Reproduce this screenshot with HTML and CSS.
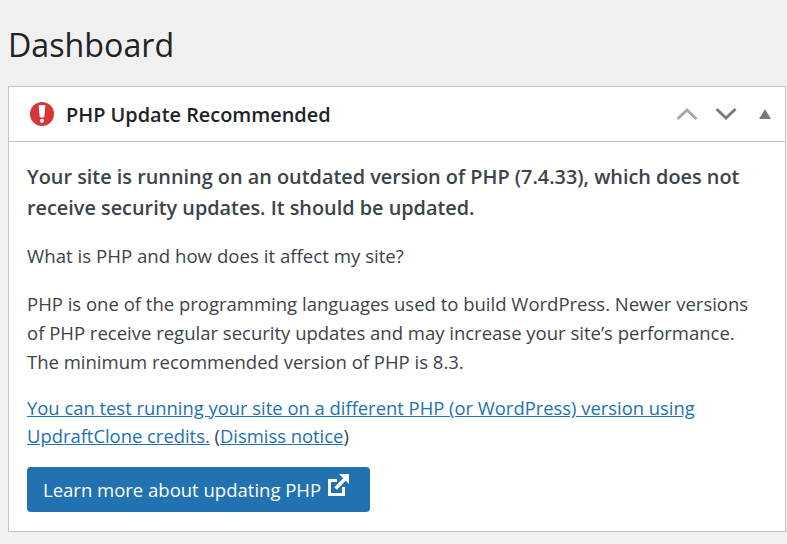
FILE: index.html
```html
<!DOCTYPE html>
<html lang="en">
<head>
  <meta charset="UTF-8" />
  <title>Dashboard</title>
  <link rel="stylesheet" href="styles.css">
</head>
<body>
  <h1>Dashboard</h1>

  <div class="postbox">
    <div class="postbox-header">
      <svg class="alert-icon" width="24" height="24" viewBox="0 0 24 24">
        <circle cx="12" cy="12" r="12" fill="#d63638"/>
        <path d="M9.2 3.5 H14.8 L13.8 15 H10.2 Z" fill="#fff" stroke="#fff" stroke-linejoin="round"/>
        <circle cx="12" cy="18.8" r="2.1" fill="#fff"/>
      </svg>
      <h2>PHP Update Recommended</h2>
      <div class="handle-actions">
        <svg width="22" height="14" viewBox="0 0 22 14"><path d="M1.5 12 L11 3 L20.5 12" fill="none" stroke="#a7aaad" stroke-width="3"/></svg>
        <svg width="22" height="14" viewBox="0 0 22 14"><path d="M1.5 2 L11 11 L20.5 2" fill="none" stroke="#787c82" stroke-width="3"/></svg>
        <svg class="toggle" width="12" height="10" viewBox="0 0 12 10"><path d="M6 0 L12 10 L0 10 Z" fill="#787c82"/></svg>
      </div>
    </div>

    <div class="inside">
      <p class="lead">Your site is running on an outdated version of PHP (7.4.33), which does not receive security updates. It should be updated.</p>
      <p class="question">What is PHP and how does it affect my site?</p>
      <p>PHP is one of the programming languages used to build WordPress. Newer versions<br>of PHP receive regular security updates and may increase your site’s performance.<br>The minimum recommended version of PHP is 8.3.</p>
      <p class="links"><a href="#">You can test running your site on a different PHP (or WordPress) version using UpdraftClone credits.</a> (<a href="#">Dismiss notice</a>)</p>
      <a class="button" href="#">Learn more about updating PHP
        <svg width="21" height="22" viewBox="0 0 21 22">
          <path d="M9 6.5 H1.5 V20.5 H15.5 V13" fill="none" stroke="#fff" stroke-width="3"/>
          <path d="M11 0 H21 V10 Z" fill="#fff"/>
          <path d="M7.5 14.5 L17 5" fill="none" stroke="#fff" stroke-width="3.5"/>
        </svg>
      </a>
    </div>
  </div>
</body>
</html>
```

FILE: styles.css
```css
body {
  margin: 0;
  padding: 0 1px 0 8px;
  background-color: #f0f0f1;
  color: #3c434a;
  font-family: "Open Sans", "Noto Sans", sans-serif;
  font-size: 18.5px;
  line-height: 29px;
}

h1 {
  margin: 0;
  padding: 24px 0 21px;
  color: #1d2327;
  font-size: 32.2px;
  font-weight: 400;
  line-height: 41px;
}

.postbox {
  background: #fff;
  border: 1px solid #c3c4c7;
  box-shadow: 0 1px 1px rgba(0,0,0,0.04);
}

.postbox-header {
  display: flex;
  align-items: center;
  height: 54px;
  padding: 0 14px 0 21px;
  border-bottom: 1px solid #c3c4c7;
}

.alert-icon {
  margin-right: 12px;
}

h2 {
  flex: 1;
  margin: 0;
  color: #1d2327;
  font-size: 19.9px;
  font-weight: 600;
}

.handle-actions {
  display: flex;
  align-items: center;
  gap: 17px;
}

.toggle {
  margin-left: 5px;
}

.inside {
  padding: 19px 18px 19px;
}

p {
  margin: 0 0 18px;
}

.lead {
  font-size: 19.85px;
  font-weight: 600;
  line-height: 31px;
}

.question {
  margin-bottom: 19px;
  font-size: 18.65px;
}

.links {
  margin-bottom: 17px;
  font-size: 18.4px;
  line-height: 28px;
}

a {
  color: #2271b1;
}

.button {
  display: inline-flex;
  align-items: center;
  gap: 7px;
  height: 45px;
  padding: 0 21px 0 16px;
  background: #2271b1;
  border-radius: 4px;
  color: #fff;
  text-decoration: none;
}

.button svg {
  margin-bottom: 10px;
}
```
